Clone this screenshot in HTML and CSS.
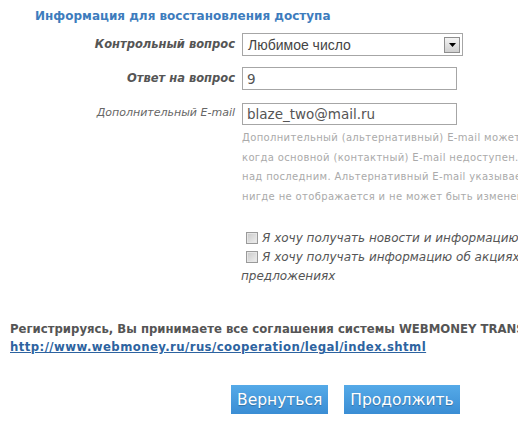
FILE: index.html
```html
<!DOCTYPE html>
<html lang="ru">
<head>
    <meta charset="UTF-8">
    <title>Регистрация WebMoney</title>
    <link rel="stylesheet" href="styles.css">
</head>
<body>
    <div class="page">
        <h3 class="section-title">Информация для восстановления доступа</h3>

        <div class="form">
            <label class="label strong">Контрольный вопрос</label>
            <div class="field">
                <div class="select">
                    <span class="select-value">Любимое число</span>
                    <span class="select-btn">
                        <svg width="7" height="4" viewBox="0 0 7 4"><path d="M0 0h7L3.5 4z" fill="#000"/></svg>
                    </span>
                </div>
            </div>

            <label class="label strong row2">Ответ на вопрос</label>
            <div class="field row2">
                <input type="text" class="input" value="9">
            </div>

            <label class="label light row3">Дополнительный E-mail</label>
            <div class="field row3">
                <input type="text" class="input short" value="blaze_two@mail.ru">
                <p class="hint">Дополнительный (альтернативный) E-mail может быть использован для восстановления доступа,<br>
                когда основной (контактный) E-mail недоступен. Он имеет приоритет при восстановлении<br>
                над последним. Альтернативный E-mail указывается только при регистрации, он<br>
                нигде не отображается и не может быть изменен в дальнейшем.</p>
            </div>

            <div class="field checks">
                <div class="check-line"><span class="checkbox"></span><em>Я хочу получать новости и информацию о системе WebMoney Transfer</em></div>
                <div class="check-line"><span class="checkbox"></span><em>Я хочу получать информацию об акциях, конкурсах и специальных</em></div>
                <div class="check-line"><em>предложениях</em></div>
            </div>
        </div>

        <div class="agreement">
            Регистрируясь, Вы принимаете все соглашения системы WEBMONEY TRANSFER, размещенные по адресу<br>
            <a href="#">http://www.webmoney.ru/rus/cooperation/legal/index.shtml</a>
        </div>

        <div class="buttons">
            <button class="btn">Вернуться</button>
            <button class="btn">Продолжить</button>
        </div>
    </div>
</body>
</html>
```

FILE: styles.css
```css
html, body {
    margin: 0;
    padding: 0;
    overflow: hidden;
    background: #fff;
}
body {
    font-family: "DejaVu Sans", Verdana, sans-serif;
    color: #555;
}
.page {
    width: 900px;
}
.section-title {
    margin: 0;
    padding: 8px 0 0 35px;
    height: 25px;
    font-size: 12px;
    line-height: 16px;
    color: #3d7cbd;
}
.form {
    display: grid;
    grid-template-columns: 235px 600px;
    column-gap: 7px;
    row-gap: 11px;
    align-items: start;
}
.label {
    text-align: right;
    font-style: italic;
    font-size: 11px;
    line-height: 23px;
    white-space: nowrap;
}
.label.strong {
    font-size: 11.5px;
    font-weight: bold;
    color: #555;
}
.label.light {
    color: #666;
    line-height: 20px;
}
.row3 {
    margin-top: 2px;
}
.select {
    width: 214px;
    height: 21px;
    border: 1px solid #a6a6a6;
    display: flex;
    align-items: center;
    justify-content: space-between;
    padding-left: 5px;
    box-sizing: content-box;
    color: #444;
}
.select-value {
    font-family: "Liberation Sans", Arial, sans-serif;
    font-size: 14px;
}
.select-btn {
    width: 14px;
    height: 14px;
    margin-right: 2px;
    border: 1px solid #8e8e8e;
    background: linear-gradient(#f4f4f4, #cfcfcf);
    display: flex;
    align-items: center;
    justify-content: center;
}
.input {
    display: block;
    width: 215px;
    height: 23px;
    box-sizing: border-box;
    margin: 0;
    border: 1px solid #a6a6a6;
    padding: 0 4px;
    font-family: "DejaVu Sans", Verdana, sans-serif;
    font-size: 13.5px;
    color: #555;
    outline: none;
}
.input.short {
    height: 22px;
}
.hint {
    margin: 3px 0 0;
    font-size: 10px;
    line-height: 19.5px;
    letter-spacing: 0.35px;
    color: #aaa;
    white-space: nowrap;
}
.checks {
    grid-column: 2;
    margin-top: 11px;
    margin-left: -1px;
}
.check-line {
    display: flex;
    align-items: center;
    height: 19px;
    font-size: 12px;
    white-space: nowrap;
    color: #555;
}
.checkbox {
    width: 10px;
    height: 10px;
    margin: 0 4px 0 5px;
    border: 1px solid #9a9a9a;
    background: linear-gradient(135deg, #c9c9c9, #efefef);
    box-shadow: inset 0 0 0 1px #e6e6e6;
}
.agreement {
    margin-top: 35px;
    padding-left: 10px;
    font-size: 11.7px;
    font-weight: bold;
    line-height: 18px;
    white-space: nowrap;
    color: #555;
}
.agreement a {
    color: #2d63a0;
    letter-spacing: 0.42px;
}
.buttons {
    display: flex;
    gap: 16px;
    margin-top: 29px;
    padding-left: 231px;
}
.btn {
    height: 29px;
    padding: 0 6px;
    border: none;
    background: linear-gradient(#55aae8, #3a8dd4);
    color: #fff;
    font-family: "DejaVu Sans", Verdana, sans-serif;
    font-size: 15.5px;
    text-shadow: 0 1px 1px rgba(0,0,0,0.25);
    cursor: pointer;
}
```
